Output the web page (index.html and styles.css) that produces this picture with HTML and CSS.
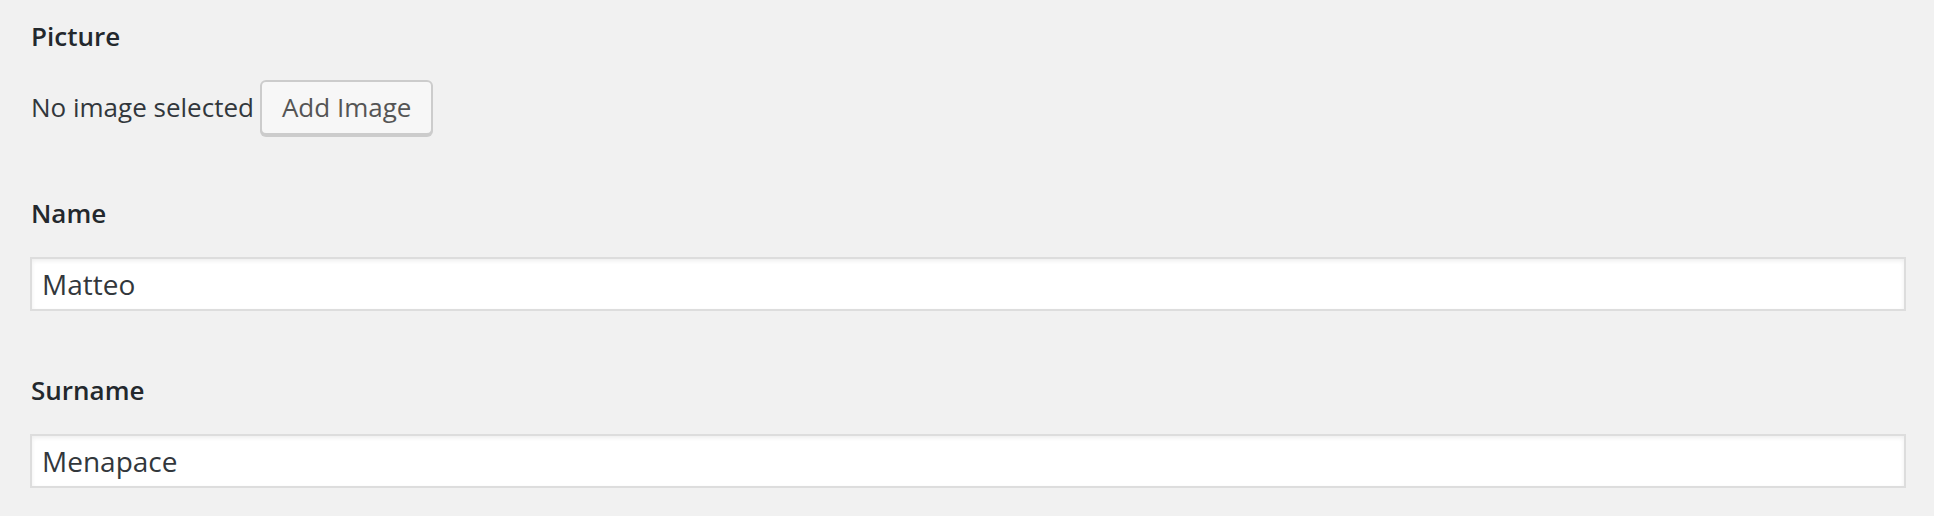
FILE: index.html
```html
<!DOCTYPE html>
<html lang="en">
<head>
<meta charset="utf-8">
<title>Profile fields</title>
<link rel="stylesheet" href="styles.css">
</head>
<body>
<div class="form">
  <div class="field field-picture">
    <label class="label">Picture</label>
    <div class="picture-row">
      <span class="status">No image selected</span>
      <button class="button" type="button">Add Image</button>
    </div>
  </div>
  <div class="field">
    <label class="label" for="name">Name</label>
    <input class="input" id="name" type="text" value="Matteo">
  </div>
  <div class="field">
    <label class="label" for="surname">Surname</label>
    <input class="input" id="surname" type="text" value="Menapace">
  </div>
</div>
</body>
</html>
```

FILE: styles.css
```css
html, body {
  margin: 0;
  padding: 0;
  background: #f1f1f1;
}
body {
  font-family: "Open Sans", "Liberation Sans", sans-serif;
  font-size: 26px;
  color: #23282d;
}
.form {
  padding: 18px 28px 0 30px;
  display: flex;
  flex-direction: column;
  gap: 61px;
}
.field {
  display: flex;
  flex-direction: column;
  gap: 26px;
}
.label {
  display: block;
  font-weight: 600;
  line-height: 36px;
  height: 36px;
  padding-left: 1px;
  color: #23282d;
}
.picture-row {
  display: flex;
  align-items: center;
  gap: 6px;
  height: 54px;
}
.status {
  line-height: 36px;
  color: #32373c;
  padding-left: 1px;
}
.button {
  font-family: inherit;
  font-size: 26px;
  height: 55px;
  line-height: 51px;
  padding: 0 20px;
  border: 2px solid #cccccc;
  border-radius: 6px;
  background: #f7f7f7;
  color: #555555;
  box-shadow: 0 2px 0 #cccccc;
}
.input {
  display: block;
  box-sizing: border-box;
  width: 100%;
  height: 54px;
  margin: 0;
  padding: 0 10px;
  font-family: inherit;
  font-size: 28px;
  color: #32373c;
  background: #ffffff;
  border: 2px solid #dddddd;
  box-shadow: inset 0 2px 4px rgba(0, 0, 0, 0.07);
  outline: none;
}
```
